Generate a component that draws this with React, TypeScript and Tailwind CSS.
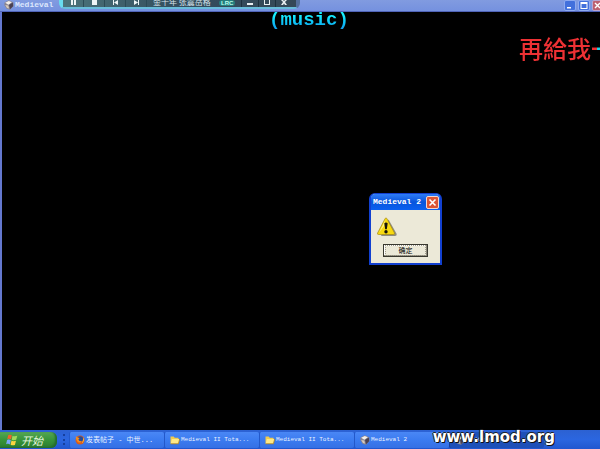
import { ReactNode } from 'react'
import clsx from 'clsx'

interface Task {
  id: number
  label: string
  icon: ReactNode
  active?: boolean
}

function HelmetIcon() {
  return (
    <svg viewBox="0 0 10 10" className="size-2.5 shrink-0">
      <path d="M.6 2.600 4.800.3l4.400 2L9.700 6 6 9.800 2.600 8.800.3 5Z" fill="#8a8591" />
      <path d="M1.200 2.800 4.800.9l3 1.400-3.400 2.500Z" fill="#f4efea" />
      <path d="m5 5 3.800-2.400.3 3.600L6 9.200Z" fill="#4a4152" />
      <path d="m1.200 5 3 .6L5 8.600 3 8Z" fill="#d8cabb" />
    </svg>
  )
}

function FolderIcon() {
  return (
    <svg viewBox="0 0 10 10" className="size-2.5 shrink-0">
      <path d="M.5 1.500h3.200l1 1.200h3.800v5.800H.5Z" fill="#f1cb4f" />
      <path d="M1.800 4h7.900L8.500 8.800H.7Z" fill="#ffe987" />
      <path d="M.7 8.800h7.700L9.700 4" fill="none" stroke="#a87c1c" strokeWidth=".8" />
    </svg>
  )
}

function FirefoxIcon() {
  return (
    <svg viewBox="0 0 10 10" className="size-2.5 shrink-0">
      <circle cx="5" cy="5" r="4.500" fill="#d95b1b" />
      <circle cx="5.300" cy="4" r="2.800" fill="#294c98" />
      <path d="M.8 1.200 2.700 2.400 4.600 3 3.400 4.500l1 1.500 2.300.3C6 8 3.200 8 2 6 1.200 4.700.8 3 .8 1.200Z" fill="#f28c20" />
      <path d="M8.300 2.300c1.200 2.500.6 5-1.600 6.200 1.200-2 1.500-4 1.600-6.200Z" fill="#ffc83a" />
    </svg>
  )
}

function WindowsFlag() {
  return (
    <svg viewBox="0 0 12 12" className="size-3 shrink-0">
      <path d="M2.200 1.200C3.500.4 4.700.6 5.800 1.300L5 5.300C3.900 4.600 2.700 4.500 1.300 5.100Z" fill="#f0622d" />
      <path d="M6.500 1.700c1.300.8 2.800.7 4.800.1L10.200 5.800C8.600 6.500 7 6.400 5.700 5.700Z" fill="#a2d95a" />
      <path d="M1.100 6c1.400-.6 2.600-.5 3.700.2L4 10.400C2.900 9.700 1.700 9.600.1 10.200Z" fill="#7ba7fa" />
      <path d="M5.500 6.600c1.300.7 2.900.7 4.500.1l-1.100 4.200c-1.500.6-2.900.6-4.300-.1Z" fill="#fbd440" />
    </svg>
  )
}

function WarningIcon() {
  return (
    <svg viewBox="0 0 20 20" className="size-5">
      <path d="M11.500 2.500 19.700 17q.3 1.900-1.700 1.900H4Z" fill="#8f8c80" />
      <path d="M8.200 1.400q.8-1 1.600 0L17.500 16q.3 1.500-1.200 1.500H1.500Q.1 17.500.6 16Z" fill="#f7d910" stroke="#a58a13" strokeWidth=".7" />
      <path d="M8.300 3 2.200 15.500 7 9Z" fill="#fff48a" />
      <path d="M7.300 6.200q1.700-1.600 3.400 0l-.9 6H8.200Z" fill="#16130a" />
      <circle cx="9" cy="14.700" r="1.700" fill="#16130a" />
    </svg>
  )
}

const tasks: Task[] = [
  { id: 1, label: '发表帖子 - 中世...', icon: <FirefoxIcon /> },
  { id: 2, label: 'Medieval II Tota...', icon: <FolderIcon /> },
  { id: 3, label: 'Medieval II Tota...', icon: <FolderIcon /> },
  { id: 4, label: 'Medieval 2', icon: <HelmetIcon /> },
  { id: 5, label: 'Medieval 2', icon: <HelmetIcon />, active: true },
]

const playerButtons = [
  { name: 'Pause', d: 'M3 0h2v5H3ZM6 0h2v5H6Z' },
  { name: 'Stop', d: 'M3 0h5v5H3Z' },
  { name: 'Previous', d: 'M3 0h1v5H3ZM8 0v5L4 2.500Z' },
  { name: 'Next', d: 'M7 0h1v5H7ZM3 0v5l4-2.500Z' },
]

const playerWindowButtons = [
  { name: 'Minimize player', d: 'M2 3h6v2H2Z' },
  { name: 'Maximize player', d: 'M2 0h1v4h4V0h1v5H2Z' },
  { name: 'Close player', d: 'M2 0h2l1 1 1-1h2L6 2l2 3H6L5 3.500 4 5H2l2-3Z' },
]

function MusicPlayer() {
  return (
    <div className="absolute left-[59px] top-0 flex h-[9px] w-[241px] rounded-b-md border-b-2 border-l-4 border-r-4 border-b-[#69bdda] border-l-[#69dcf0] border-r-[#556f9c] bg-[#33505c]">
      <div className="flex w-full items-start overflow-hidden bg-linear-to-r from-[#4b747b] via-[#334d5c] to-[#354857]">
        <div className="flex">
          {playerButtons.map((b) => (
            <button key={b.name} aria-label={b.name} className="flex h-[7px] w-[21px] justify-center border-r border-[#2c4b56]">
              <svg viewBox="0 0 11 6" className="h-1.5 w-[11px]"><path d={b.d} fill="#eef6f7" /></svg>
            </button>
          ))}
        </div>
        <span className="-mt-0.5 ml-1.5 w-[58px] overflow-hidden whitespace-nowrap font-['Noto_Sans_CJK_SC',sans-serif] text-[8px] leading-[8px] text-[#d4e2e9]">
          金十年 张震岳格式
        </span>
        <button className="ml-2 h-1.5 rounded-sm bg-[#267d7c] px-0.5 font-['Liberation_Sans',sans-serif] text-[6px] font-bold leading-[6px] text-[#b9fff0]">
          LRC
        </button>
        <div className="ml-1.5 flex">
          {playerWindowButtons.map((b) => (
            <button key={b.name} aria-label={b.name} className="flex h-[7px] w-[17px] justify-center border-l border-[#1d303d]">
              <svg viewBox="0 0 10 6" className="h-1.5 w-2.5"><path d={b.d} fill="#e9eff2" /></svg>
            </button>
          ))}
        </div>
      </div>
    </div>
  )
}

function TitleBar() {
  return (
    <header className="flex h-3 shrink-0 items-start justify-between overflow-hidden border-b border-[#5064b8] bg-linear-to-b from-[#819be0] to-[#7591df] pl-1">
      <div className="flex items-center gap-px">
        <HelmetIcon />
        <h1 className="font-['Liberation_Mono',monospace] text-[8px] font-bold leading-[10px] text-[#dce6fc]">Medieval</h1>
      </div>
      <div className="-mr-1 flex gap-0.5">
        <button aria-label="Minimize" className="h-[11px] w-3 rounded-xs border border-[#8eaaf0] bg-[#4270dc]">
          <svg viewBox="0 0 10 9"><path d="M2 6h4v1.500H2Z" fill="#fff" /></svg>
        </button>
        <button aria-label="Restore" className="h-[11px] w-3 rounded-xs border border-[#8eaaf0] bg-[#4270dc]">
          <svg viewBox="0 0 10 9"><path d="M1.500 1h7v7h-7Zm1 2v4h5V3Z" fill="#fff" fillRule="evenodd" /></svg>
        </button>
        <button aria-label="Close" className="h-[11px] w-3 rounded-xs border border-[#b9a5d0] bg-[#bd6070]">
          <svg viewBox="0 0 10 9"><path d="m2 2 5 5m0-5L2 7" stroke="#fff" strokeWidth="1.400" /></svg>
        </button>
      </div>
    </header>
  )
}

function AlertDialog() {
  return (
    <section
      role="alertdialog"
      aria-labelledby="alert-title"
      className="absolute left-[369px] top-[193px] w-[73px] rounded-t-md border-2 border-t border-[#1240d0] bg-[#ece9d8]"
    >
      <div className="flex h-4 items-center justify-between rounded-t-sm bg-linear-to-b from-[#2f7cf5] via-[#0855dd] to-[#0a60f0] pl-0.5 pr-px">
        <h2 id="alert-title" className="whitespace-nowrap font-['Liberation_Mono',monospace] text-[8px] font-bold leading-3 text-white">
          Medieval 2
        </h2>
        <button aria-label="Close dialog" className="size-[13px] rounded-xs border border-[#f3d7d0] bg-[#dc5535]">
          <svg viewBox="0 0 11 11"><path d="m2.500 2.500 6 6m0-6-6 6" stroke="#fff" strokeWidth="1.600" /></svg>
        </button>
      </div>
      <div className="flex flex-col px-1.5 pb-1.5 pt-[7px]">
        <WarningIcon />
        <button className="ml-1.5 mt-[7px] h-[13px] w-[45px] border border-[#39382f] bg-[#ece9d8] font-['Noto_Sans_CJK_SC',sans-serif] text-[7px] leading-[9px] text-black shadow-[inset_-1px_-1px_#8d897b,inset_1px_1px_#fff]">
          <span className="mx-px block border border-dotted border-[#a19d8e]">确定</span>
        </button>
      </div>
    </section>
  )
}

function Taskbar() {
  return (
    <footer className="flex h-[19px] shrink-0 items-stretch bg-linear-to-b from-[#2c61d2] via-[#2b66e0] to-[#2157cf]">
      <button className="mb-px mt-0.5 flex w-[57px] shrink-0 items-center gap-[3px] rounded-r-md bg-linear-to-b from-[#55a653] via-[#37943a] to-[#2b7d30] pl-1.5 font-['Noto_Sans_CJK_SC',sans-serif] text-[11px] italic leading-[14px] text-[#e8f5df] shadow-[inset_-2px_-1px_2px_#236b2e]">
        <WindowsFlag />
        开始
      </button>
      <div className="my-1 ml-1.5 mr-1 w-0.5 shrink-0 border-l-2 border-dotted border-[#153f9e]" />
      <nav className="flex min-w-0 flex-1">
        {tasks.map((task) => (
          <button
            key={task.id}
            className={clsx(
              'mb-px mt-0.5 flex w-[95px] items-center gap-px overflow-hidden whitespace-nowrap rounded-xs border-l pl-[5px]',
              "font-['Liberation_Mono','Noto_Sans_CJK_SC',monospace] leading-[10px]",
              task.id === 1 ? 'text-[7px]' : 'text-[6px]',
              task.active
                ? 'border-[#153d99] bg-[#1e50b8] text-[#b9cdf6]'
                : 'border-[#2358c9] bg-linear-to-b from-[#4a87f5] via-[#3b7bf0] to-[#3570e4] text-[#eaf2ff]',
            )}
          >
            {task.icon}
            {task.label}
          </button>
        ))}
      </nav>
    </footer>
  )
}

export default function App() {
  return (
    <div className="relative flex min-h-screen flex-col overflow-hidden bg-black">
      <TitleBar />
      <main className="flex-1 border-l-2 border-[#6478cf] bg-black" />
      <Taskbar />

      <MusicPlayer />
      <p className="absolute left-[269px] top-2 bg-linear-to-b from-[#18efff] from-30% to-[#168be8] bg-clip-text font-['Liberation_Mono',monospace] text-[19px] font-bold leading-6 text-transparent">
        (music)
      </p>
      <p className="absolute left-[519px] top-[34px] whitespace-nowrap bg-linear-to-r from-[#ed3134] from-[78px] to-[#19d8e8] to-[78px] bg-clip-text font-['Noto_Sans_CJK_TC',sans-serif] text-[24px] font-medium leading-7 text-transparent">
        再給我一
      </p>
      <AlertDialog />
      <span className="absolute bottom-1 right-[45px] font-['DejaVu_Sans',sans-serif] text-[15px] font-bold leading-4 text-white [text-shadow:1px_1px_#111,-1px_0_#222,0_-1px_#222]">
        www.lmod.org
      </span>
    </div>
  )
}
